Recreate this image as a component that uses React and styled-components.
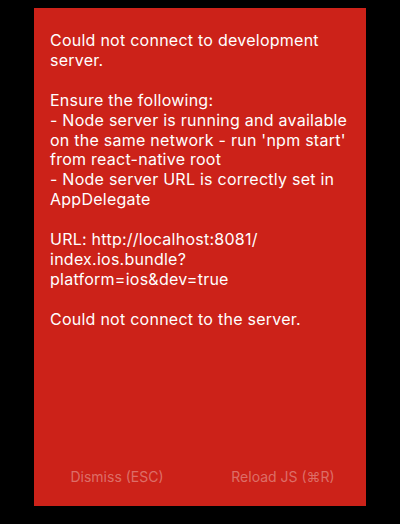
import React from "react";
import styled, { createGlobalStyle } from "styled-components";

const GlobalStyle = createGlobalStyle`
	html, body {
		margin: 0;
		padding: 0;
		background: #000;
	}
	body {
		font-family: Inter, "Open Sans", "Liberation Sans", sans-serif;
	}
`;

const message = [
	["Could not connect to development", "server."],
	[
		"Ensure the following:",
		"- Node server is running and available",
		"on the same network - run 'npm start'",
		"from react-native root",
		"- Node server URL is correctly set in",
		"AppDelegate",
	],
	["URL: http://localhost:8081/", "index.ios.bundle?", "platform=ios&dev=true"],
	["Could not connect to the server."],
];

export default function App() {
	return (
		<>
			<GlobalStyle />
			<Screen>
				<RedBox>
					<Message>
						{message.map((para, i) => (
							<Paragraph key={i}>
								{para.map((line) => (
									<Line key={line}>{line}</Line>
								))}
							</Paragraph>
						))}
					</Message>
					<Buttons>
						<Button>Dismiss (ESC)</Button>
						<Button>Reload JS (⌘R)</Button>
					</Buttons>
				</RedBox>
			</Screen>
		</>
	);
}

const Screen = styled.div`
	width: 400px;
	height: 524px;
	background: #000;
	padding: 8px 34px 18px;
	box-sizing: border-box;
`;

const RedBox = styled.div`
	height: 498px;
	background: #cc2219;
	display: flex;
	flex-direction: column;
`;

const Message = styled.div`
	flex: 1;
	padding: 23px 16px 0;
	color: #fff;
	font-size: 16px;
	line-height: 19.9px;
	letter-spacing: 0.25px;
`;

const Paragraph = styled.div`
	margin-bottom: 19.9px;
`;

const Line = styled.div`
	white-space: nowrap;
`;

const Buttons = styled.div`
	display: flex;
	height: 60px;
	align-items: center;
`;

const Button = styled.div`
	flex: 1;
	text-align: center;
	font-size: 14px;
	color: rgba(255, 255, 255, 0.35);
`;
